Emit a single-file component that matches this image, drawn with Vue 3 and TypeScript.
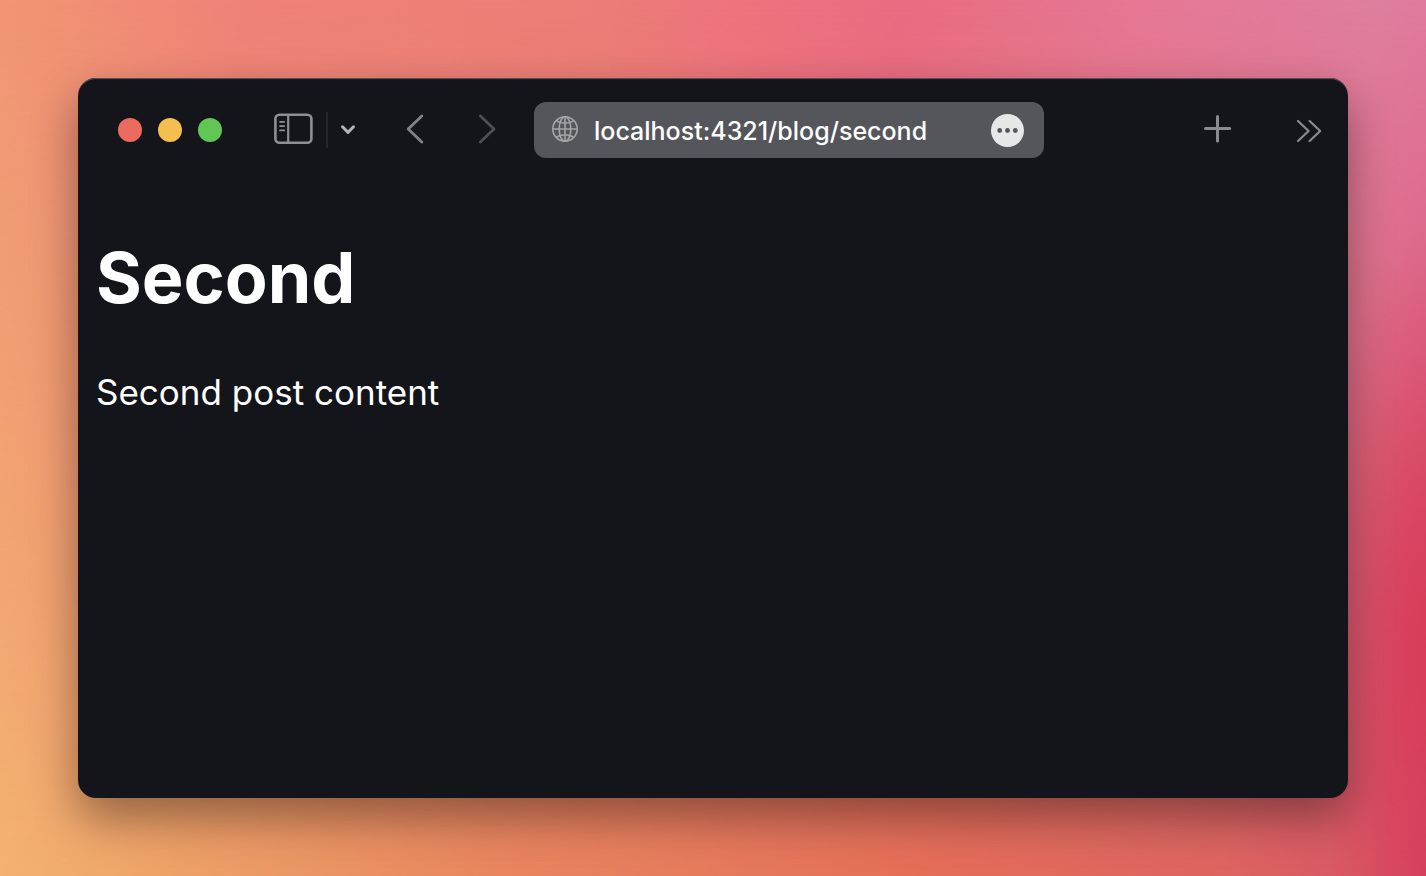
<script setup lang="ts">
import { ref } from 'vue'

interface Post {
  title: string
  body: string
}

const address = ref<string>('localhost:4321/blog/second')
const post: Post = { title: 'Second', body: 'Second post content' }
const lights: { name: string; tone: string }[] = [
  { name: 'Close', tone: 'red' },
  { name: 'Minimize', tone: 'yellow' },
  { name: 'Zoom', tone: 'green' },
]
</script>

<template>
  <div class="desktop">
    <div class="window">
      <header class="toolbar">
        <div class="lights">
          <button v-for="l in lights" :key="l.name" type="button" class="light" :class="l.tone" :aria-label="l.name"></button>
        </div>

        <div class="sidebar-group">
          <button type="button" class="tool" aria-label="Toggle sidebar">
            <svg width="40" height="56" viewBox="0 0 40 56" fill="none" stroke="#8f8f93" stroke-width="2.6" stroke-linecap="round">
              <rect x="1.4" y="12.8" width="36" height="28" rx="4" />
              <path d="M14.2 13V41" stroke-width="2.2" stroke-linecap="butt" />
              <path d="M6 19.8H10.2M6 24.1H10.2M6 28.4H10.2" stroke-width="1.7" />
            </svg>
          </button>
          <span class="divider"></span>
          <button type="button" class="tool" aria-label="Sidebar options">
            <svg width="16" height="56" viewBox="0 0 16 56" fill="none" stroke="#b4b4b6" stroke-width="3" stroke-linecap="round" stroke-linejoin="round">
              <path d="M2.5 24.8L8 30.4L13.5 24.8" />
            </svg>
          </button>
        </div>

        <nav class="history" aria-label="History">
          <button type="button" class="tool" aria-label="Back">
            <svg width="20" height="56" viewBox="0 0 20 56" fill="none" stroke="#838387" stroke-width="2.8" stroke-linecap="round" stroke-linejoin="round">
              <path d="M15.8 14L2.2 27L15.8 40" />
            </svg>
          </button>
          <button type="button" class="tool" aria-label="Forward" disabled>
            <svg width="20" height="56" viewBox="0 0 20 56" fill="none" stroke="#4f4f53" stroke-width="2.8" stroke-linecap="round" stroke-linejoin="round">
              <path d="M2.4 14L16 27L2.4 40" />
            </svg>
          </button>
        </nav>

        <form class="address" @submit.prevent>
          <svg width="26" height="56" viewBox="0 0 26 56" fill="none" stroke="#a5a5a8" stroke-width="1.6" aria-hidden="true">
            <circle cx="13" cy="27" r="12.2" />
            <ellipse cx="13" cy="27" rx="5.8" ry="12.2" />
            <path d="M13 15V39M1 27H25M4.4 18.6C9 22.2 17 22.2 21.6 18.6M4.4 35.4C9 31.8 17 31.8 21.6 35.4" />
          </svg>
          <input v-model="address" type="text" aria-label="Address" spellcheck="false" />
          <button type="button" class="page-menu" aria-label="Page menu">
            <svg width="33" height="33" viewBox="0 0 33 33" fill="#55565b">
              <circle cx="8.7" cy="16.5" r="2.4" />
              <circle cx="16.5" cy="16.5" r="2.4" />
              <circle cx="24.3" cy="16.5" r="2.4" />
            </svg>
          </button>
        </form>

        <div class="actions">
          <button type="button" class="tool" aria-label="New tab">
            <svg width="28" height="56" viewBox="0 0 28 56" fill="none" stroke="#8b8b8e" stroke-width="3" stroke-linecap="round">
              <path d="M13.5 14.5V39M1.5 26.5H25.7" />
            </svg>
          </button>
          <button type="button" class="tool" aria-label="More">
            <svg width="26" height="56" viewBox="0 0 26 56" fill="none" stroke="#8b8b8e" stroke-width="2.2" stroke-linecap="round" stroke-linejoin="round">
              <path d="M2 19L12.6 29L2 39M13.6 19L24.2 29L13.6 39" />
            </svg>
          </button>
        </div>
      </header>

      <main class="page">
        <h1>{{ post.title }}</h1>
        <p>{{ post.body }}</p>
      </main>
    </div>
  </div>
</template>

<style>
body {
  margin: 0;
}
</style>

<style scoped>
.desktop {
  position: relative;
  isolation: isolate;
  box-sizing: border-box;
  display: flex;
  min-height: 100vh;
  padding: 78px;
  font-family: Inter, "Liberation Sans", sans-serif;
  background: linear-gradient(97deg, #f19675 0%, #ef8277 16%, #ec7c78 40%, #ed717f 51%, #e96c82 59%, #e57894 74%, #e07e9f 90%, #e2739d 100%);
}

.desktop::before,
.desktop::after {
  content: "";
  position: absolute;
  inset: 0;
  z-index: -1;
}

.desktop::before {
  background: linear-gradient(90deg, #f3b271 0%, #eda067 13%, #e8875f 34%, #e36d58 66%, #dc6460 86%, #d85663 96%, #d34560 100%);
  mask-image: linear-gradient(180deg, transparent 0%, #000 100%);
}

.desktop::after {
  background: radial-gradient(ellipse 110px 420px at 100% 74%, #d83c58 0%, #d83c58aa 35%, #d83c5844 70%, #d83c5800 100%);
}

.window {
  flex: 1;
  min-width: 0;
  border-radius: 18px;
  background: #14151a;
  color: #fff;
  box-shadow: inset 0 2px 1px -1px #55585c, 0 20px 46px rgba(0, 0, 0, 0.38);
}

.toolbar {
  display: flex;
  align-items: center;
  height: 104px;
  padding: 0 26px 0 40px;
}

button {
  padding: 0;
  border: 0;
  background: none;
}

svg {
  display: block;
  flex: none;
}

.lights {
  display: flex;
  gap: 16px;
}

.light {
  width: 24px;
  height: 24px;
  border-radius: 50%;
}

.red {
  background: #ed6a5e;
}

.yellow {
  background: #f5bf4f;
}

.green {
  background: #62c655;
}

.sidebar-group {
  display: flex;
  align-items: center;
  gap: 12px;
  margin-left: 52px;
}

.divider {
  width: 2px;
  height: 36px;
  background: #26272b;
}

.history {
  display: flex;
  gap: 52px;
  margin-left: 50px;
}

.address {
  display: flex;
  flex: 1;
  align-items: center;
  gap: 16px;
  min-width: 0;
  height: 56px;
  margin-left: 36px;
  padding: 0 20px 0 18px;
  box-sizing: border-box;
  border-radius: 12px;
  background: #55565b;
}

.address input {
  flex: 1;
  min-width: 0;
  padding: 2px 0 0;
  border: 0;
  outline: 0;
  background: none;
  color: #fff;
  font: 500 25px/32px Inter, "Liberation Sans", sans-serif;
}

.page-menu {
  flex: none;
  border-radius: 50%;
  background: #e6e7e7;
}

.actions {
  display: flex;
  gap: 64px;
  margin-left: 160px;
}

.page {
  padding: 0 18px;
}

h1 {
  margin: 52px 0 0;
  font-size: 70px;
  font-weight: 700;
  line-height: 88px;
}

p {
  margin: 48px 0 0;
  font-size: 35px;
  line-height: 44px;
}
</style>
